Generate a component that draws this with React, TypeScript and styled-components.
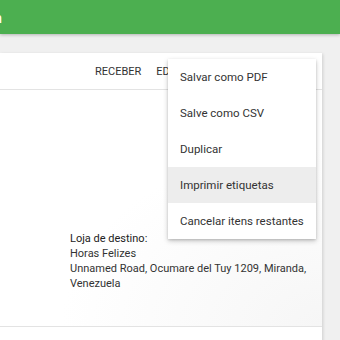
import React from "react";
import styled, { createGlobalStyle } from "styled-components";

const Global = createGlobalStyle`
  html, body { margin: 0; padding: 0; }
  body {
    background: #f0f0f0;
    font-family: Roboto, "Noto Sans", "Liberation Sans", sans-serif;
    overflow: hidden;
    width: 340px;
    height: 340px;
  }
`;

const Page = styled.div`
  display: flex;
  flex-direction: column;
  width: 340px;
  height: 340px;
  overflow: hidden;
`;

const Header = styled.header`
  height: 34px;
  flex: none;
  background: #4caf50;
  display: flex;
  align-items: center;
  box-shadow: 0 1px 3px rgba(0, 0, 0, 0.25);
  position: relative;
  z-index: 2;
`;

const TitleClip = styled.div`
  width: 2px;
  overflow: hidden;
  display: flex;
  justify-content: flex-end;
  margin-top: 1px;
`;

const Title = styled.h1`
  margin: 0;
  flex: none;
  font-size: 14px;
  font-weight: 500;
  color: #fff;
  white-space: nowrap;
  line-height: 1;
`;

const Main = styled.main`
  padding: 19px 18px 0 0;
  flex: 1;
`;

const Card = styled.section`
  position: relative;
  background: #fff;
  box-shadow: 1px 1px 3px rgba(0, 0, 0, 0.14);
  height: 320px;
`;

const Toolbar = styled.div`
  height: 36px;
  display: flex;
  align-items: center;
  padding-left: 95px;
  gap: 15px;
  border-bottom: 1px solid #e3e3e3;
`;

const ToolButton = styled.button`
  border: 0;
  background: none;
  padding: 0;
  font-family: inherit;
  font-size: 11px;
  color: #333;
  text-transform: uppercase;
  cursor: pointer;
`;

const Body = styled.div`
  height: 237px;
  box-sizing: border-box;
  padding: 141px 0 0 70px;
  border-bottom: 1px solid #e3e3e3;
  background: radial-gradient(
    ellipse 260px 180px at 100% 100%,
    #f6f6f6 0%,
    #ffffff 100%
  );
`;

const Address = styled.div`
  font-size: 11px;
  line-height: 15px;
  color: #333;
`;

const Label = styled.div`
  color: #222;
`;

const Menu = styled.ul`
  position: absolute;
  top: 6px;
  left: 168px;
  width: 148px;
  margin: 0;
  padding: 0;
  list-style: none;
  background: #fff;
  box-shadow: 0 2px 5px rgba(0, 0, 0, 0.22), 0 1px 2px rgba(0, 0, 0, 0.12);
  z-index: 3;
`;

const MenuItem = styled.li<{ $active?: boolean }>`
  height: 36px;
  display: flex;
  align-items: center;
  padding-left: 12px;
  font-size: 11.5px;
  color: #333;
  background: ${(p) => (p.$active ? "#ededed" : "transparent")};
  white-space: nowrap;
`;

const items = [
  "Salvar como PDF",
  "Salve como CSV",
  "Duplicar",
  "Imprimir etiquetas",
  "Cancelar itens restantes",
];

export default function App() {
  return (
    <>
      <Global />
      <Page>
        <Header>
          <TitleClip>
            <Title>Receber ordem</Title>
          </TitleClip>
        </Header>
        <Main>
          <Card>
            <Toolbar>
              <ToolButton>Receber</ToolButton>
              <ToolButton>Editar</ToolButton>
            </Toolbar>
            <Body>
              <Address>
                <Label>Loja de destino:</Label>
                <div>Horas Felizes</div>
                <div>Unnamed Road, Ocumare del Tuy 1209, Miranda,</div>
                <div>Venezuela</div>
              </Address>
            </Body>
            <Menu>
              {items.map((t, i) => (
                <MenuItem key={t} $active={i === 3}>
                  {t}
                </MenuItem>
              ))}
            </Menu>
          </Card>
        </Main>
      </Page>
    </>
  );
}
